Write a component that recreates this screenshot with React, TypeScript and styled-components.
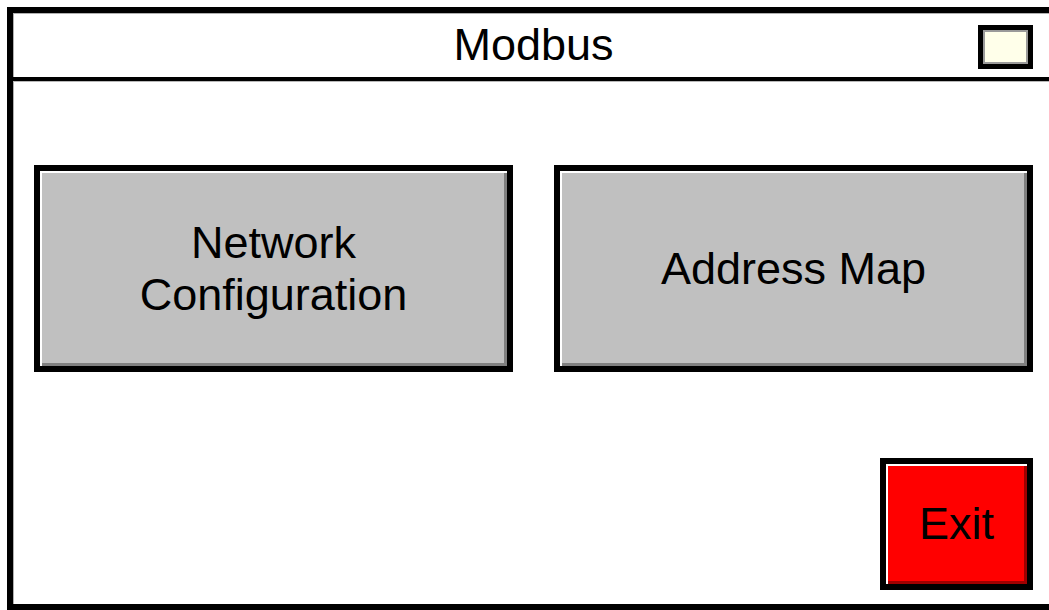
import React from "react";
import styled, { createGlobalStyle } from "styled-components";

const Global = createGlobalStyle`
  html, body {
    margin: 0;
    padding: 0;
    background: #ffffff;
    overflow: hidden;
    width: 1049px;
    height: 610px;
  }
  body {
    font-family: "Liberation Sans", Arial, sans-serif;
  }
`;

const Page = styled.div`
  width: 1049px;
  height: 610px;
  overflow: hidden;
  background: #ffffff;
  padding: 7px 0 0 7px;
  box-sizing: border-box;
`;

const Window = styled.div`
  width: 1053px;
  height: 603px;
  box-sizing: border-box;
  border: 6px solid #000000;
  display: flex;
  flex-direction: column;
  background: #ffffff;
  box-shadow: inset 1px 1px 0 #b0b0b0;
`;

const Header = styled.header`
  height: 68px;
  box-sizing: border-box;
  border-bottom: 4px solid #000000;
  display: grid;
  grid-template-columns: 1fr auto 1fr;
  align-items: center;
  box-shadow: 0 1px 0 #b8b8b8;
`;

const Title = styled.h1`
  grid-column: 2;
  margin: 0;
  font-family: "Liberation Sans", Arial, sans-serif;
  font-weight: 400;
  font-size: 45px;
  line-height: 1;
  color: #000000;
  transform: translateY(-1px);
`;

const CloseBox = styled.div`
  grid-column: 3;
  justify-self: end;
  margin-right: 21px;
  width: 55px;
  height: 44px;
  box-sizing: border-box;
  border: 5px solid #000000;
  background: #ffffea;
  box-shadow: inset 0 0 0 2px #9a9a9a;
  transform: translateY(2px);
`;

const Body = styled.main`
  flex: 1;
  display: flex;
  flex-direction: column;
  justify-content: space-between;
  padding: 84px 21px 14px 21px;
  box-sizing: border-box;
`;

const ButtonRow = styled.div`
  display: grid;
  grid-template-columns: 479px 479px;
  column-gap: 41px;
`;

const PanelButton = styled.button<{ $tone?: "gray" | "red" }>`
  box-sizing: border-box;
  border: 6px solid #000000;
  background: ${(p) => (p.$tone === "red" ? "#ff0000" : "#c0c0c0")};
  box-shadow: inset 2px 2px 0 #ffffff,
    inset -3px -3px 0 ${(p) => (p.$tone === "red" ? "#a00000" : "#808080")};
  font-family: "Liberation Sans", Arial, sans-serif;
  font-weight: 400;
  font-size: 45px;
  line-height: 52px;
  color: #000000;
  padding: 0;
  margin: 0;
  display: flex;
  align-items: center;
  justify-content: center;
  text-align: center;
`;

const MenuButton = styled(PanelButton)`
  height: 207px;
`;

const ExitRow = styled.div`
  display: flex;
  justify-content: flex-end;
`;

const ExitButton = styled(PanelButton)`
  width: 153px;
  height: 132px;
`;

export default function App() {
  return (
    <Page>
      <Global />
      <Window>
        <Header>
          <Title>Modbus</Title>
          <CloseBox />
        </Header>
        <Body>
          <ButtonRow>
            <MenuButton>
              Network
              <br />
              Configuration
            </MenuButton>
            <MenuButton>Address Map</MenuButton>
          </ButtonRow>
          <ExitRow>
            <ExitButton $tone="red">Exit</ExitButton>
          </ExitRow>
        </Body>
      </Window>
    </Page>
  );
}
